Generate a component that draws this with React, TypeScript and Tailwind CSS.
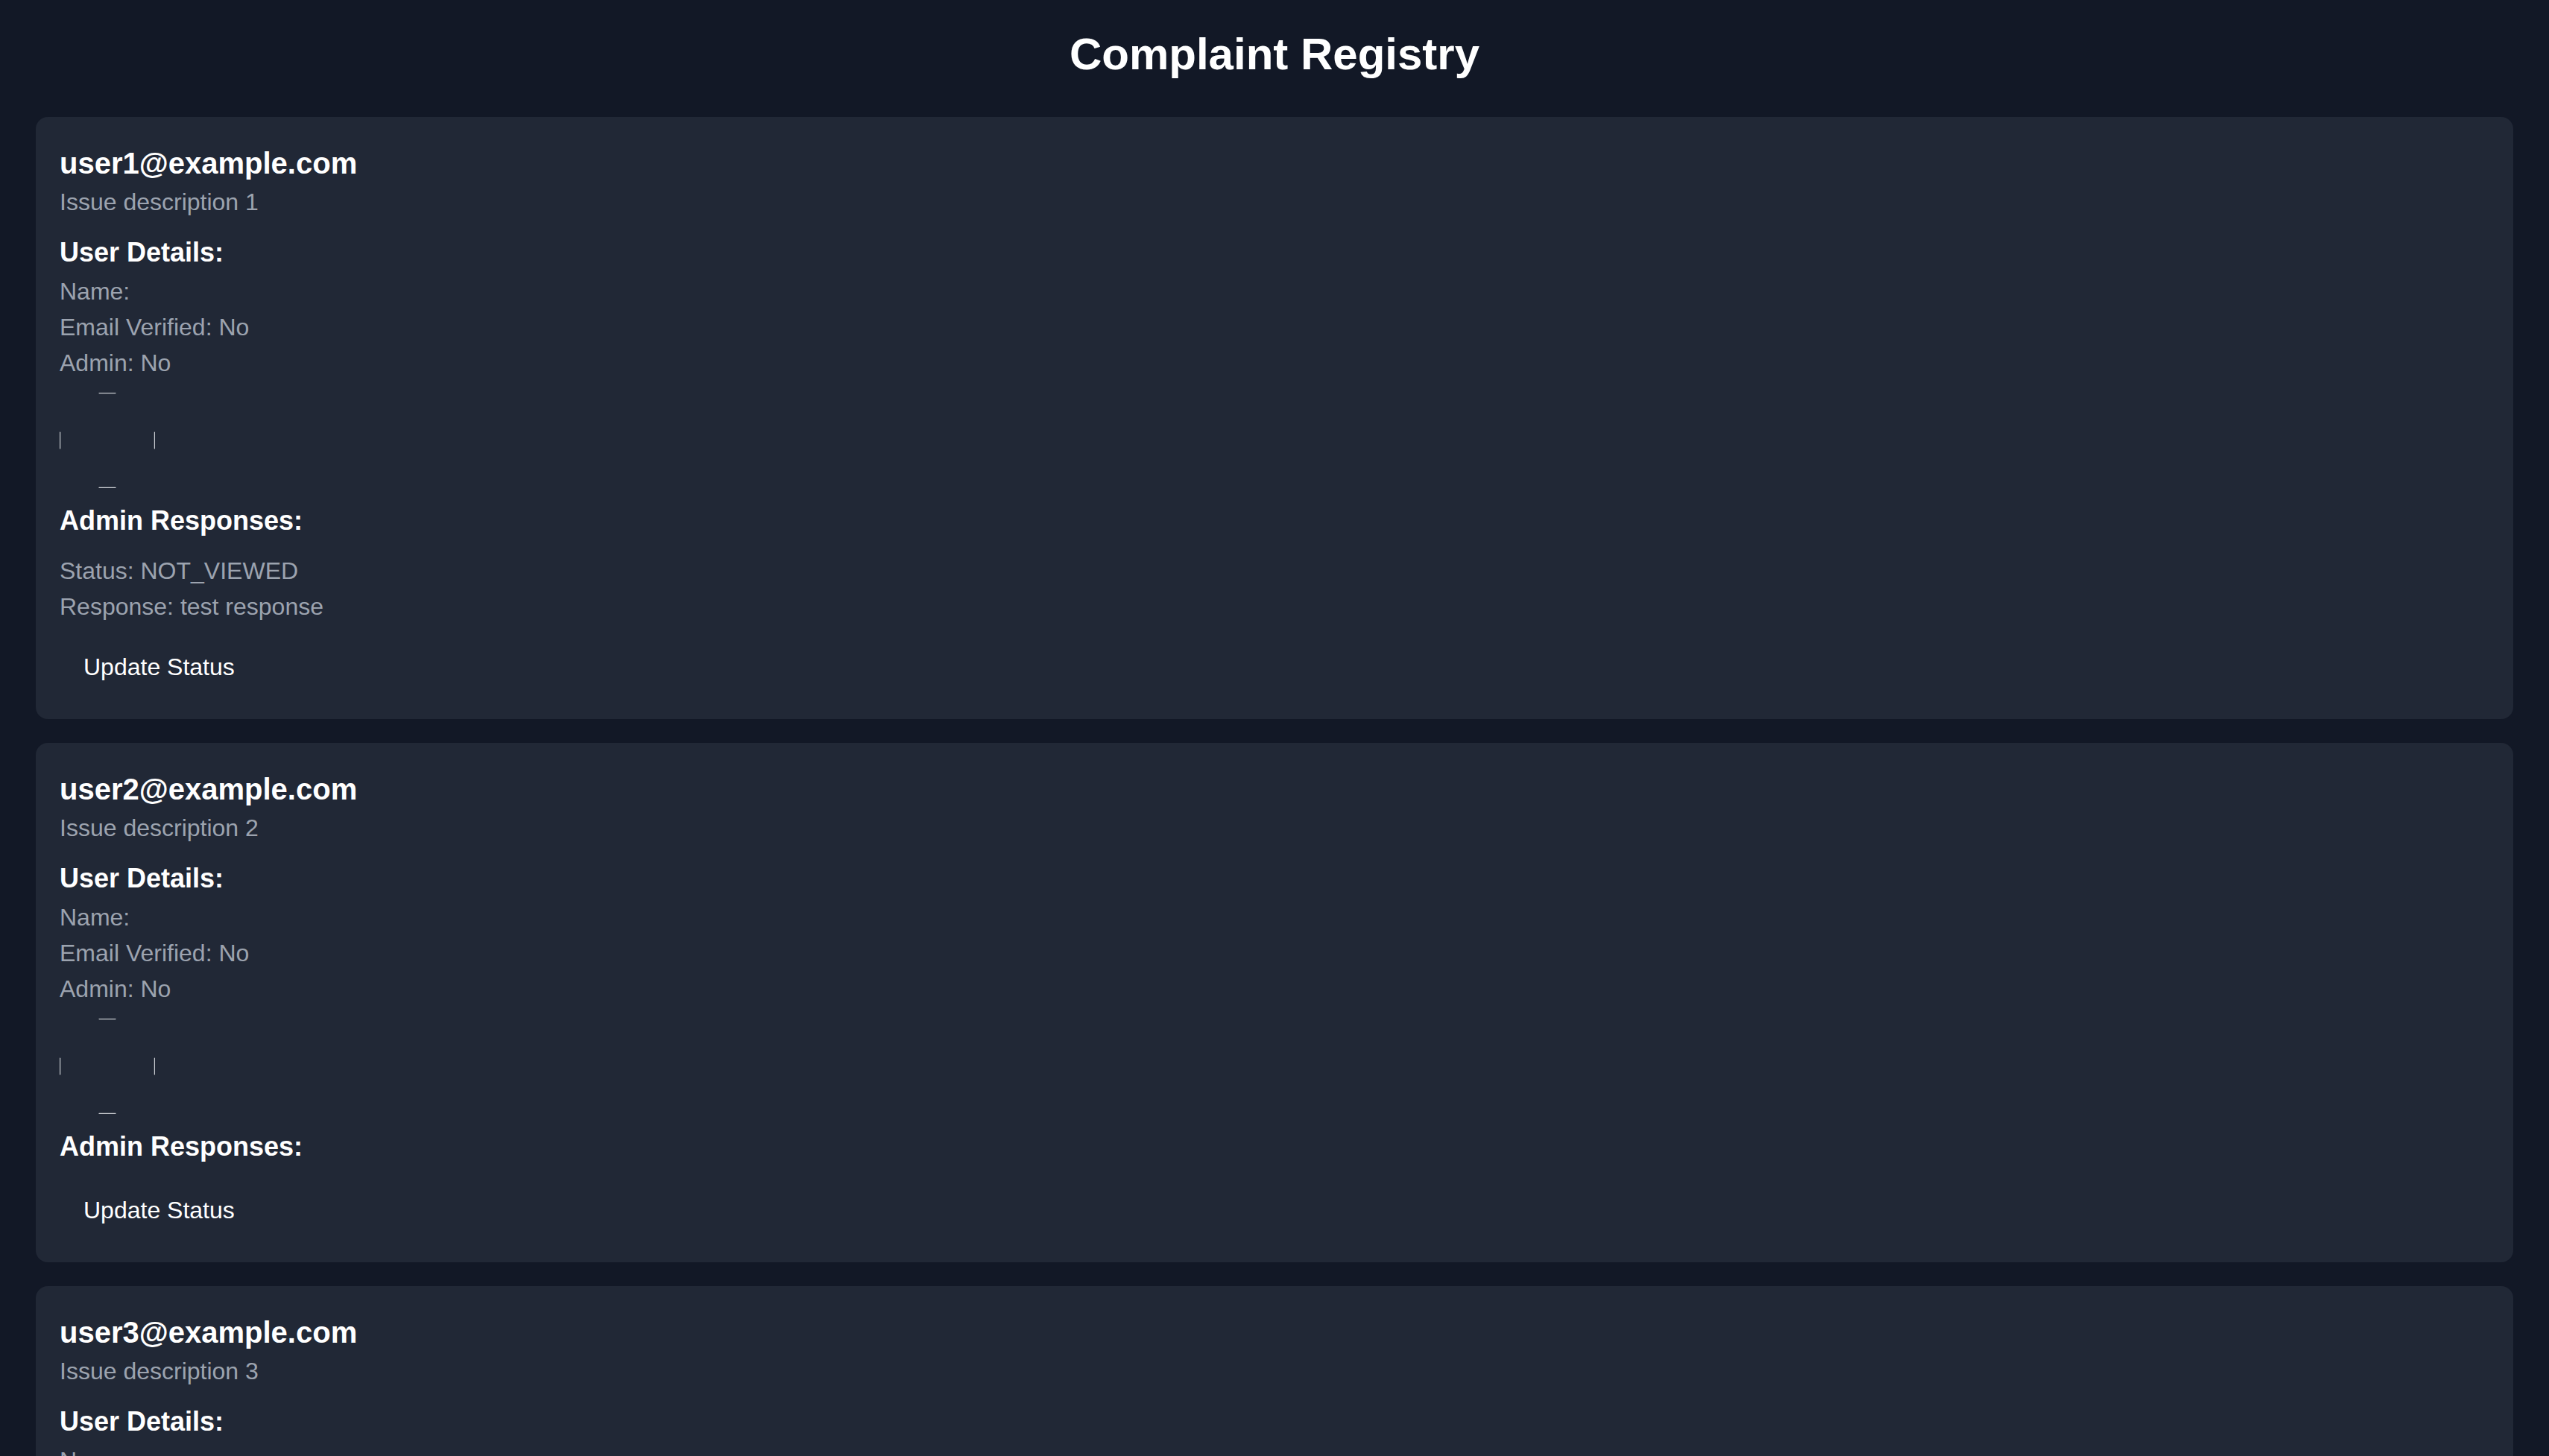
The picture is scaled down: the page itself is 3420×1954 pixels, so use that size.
type Response = { status: string; response: string };

type Complaint = {
  email: string;
  description: string;
  name: string;
  verified: boolean;
  admin: boolean;
  responses: Response[];
};

const complaints: Complaint[] = [
  {
    email: "user1@example.com",
    description: "Issue description 1",
    name: "",
    verified: false,
    admin: false,
    responses: [{ status: "NOT_VIEWED", response: "test response" }],
  },
  {
    email: "user2@example.com",
    description: "Issue description 2",
    name: "",
    verified: false,
    admin: false,
    responses: [],
  },
  {
    email: "user3@example.com",
    description: "Issue description 3",
    name: "",
    verified: false,
    admin: false,
    responses: [],
  },
];

// broken avatar: only the four tangent points of the round frame show up
const Avatar = () => (
  <svg width="128" height="128" viewBox="0 0 128 128" className="mt-[16px] block">
    <g stroke="#e5e7eb" strokeWidth="1.2" strokeOpacity="0.85" strokeLinecap="round">
      <line x1="53" y1="0.6" x2="75" y2="0.6" />
      <line x1="53" y1="127.4" x2="75" y2="127.4" />
      <line x1="0.6" y1="53" x2="0.6" y2="75" />
      <line x1="127.4" y1="53" x2="127.4" y2="75" />
    </g>
  </svg>
);

const ComplaintCard = ({ c }: { c: Complaint }) => {
  return (
    <div className="rounded-[16px] bg-[#212836] px-[32px] pt-[34px] pb-[30px]">
      <h2 className="text-[40px] leading-[56px] font-bold text-white">{c.email}</h2>
      <p className="text-[32px] leading-[48px] text-[#9ca3af]">{c.description}</p>

      <div className="mt-[16px]">
        <h3 className="text-[36px] leading-[56px] font-bold text-white">User Details:</h3>
        <p className="text-[32px] leading-[48px] text-[#9ca3af]">Name: {c.name}</p>
        <p className="text-[32px] leading-[48px] text-[#9ca3af]">Email Verified: {c.verified ? "Yes" : "No"}</p>
        <p className="text-[32px] leading-[48px] text-[#9ca3af]">Admin: {c.admin ? "Yes" : "No"}</p>
        <Avatar />
      </div>

      <div className="mt-[16px]">
        <h3 className="text-[36px] leading-[56px] font-bold text-white">Admin Responses:</h3>
        {c.responses.map((r, i) => (
          <div key={i} className="mt-[15px]">
            <p className="text-[32px] leading-[48px] text-[#9ca3af]">Status: {r.status}</p>
            <p className="text-[32px] leading-[48px] text-[#9ca3af]">Response: {r.response}</p>
          </div>
        ))}
      </div>

      <button className="mt-[17px] px-[32px] py-[16px] text-[32px] leading-[48px] text-white">Update Status</button>
    </div>
  );
};

export default function App() {
  return (
    <div className="min-h-screen bg-[#121826] px-[48px] pt-[37px] pb-[48px] font-['Liberation_Sans',Arial,sans-serif]">
      <h1 className="mb-[48px] text-center text-[60px] leading-[72px] font-bold text-white">Complaint Registry</h1>
      <div className="flex flex-col gap-[32px]">
        {complaints.map((c) => (
          <ComplaintCard key={c.email} c={c} />
        ))}
      </div>
    </div>
  );
}
